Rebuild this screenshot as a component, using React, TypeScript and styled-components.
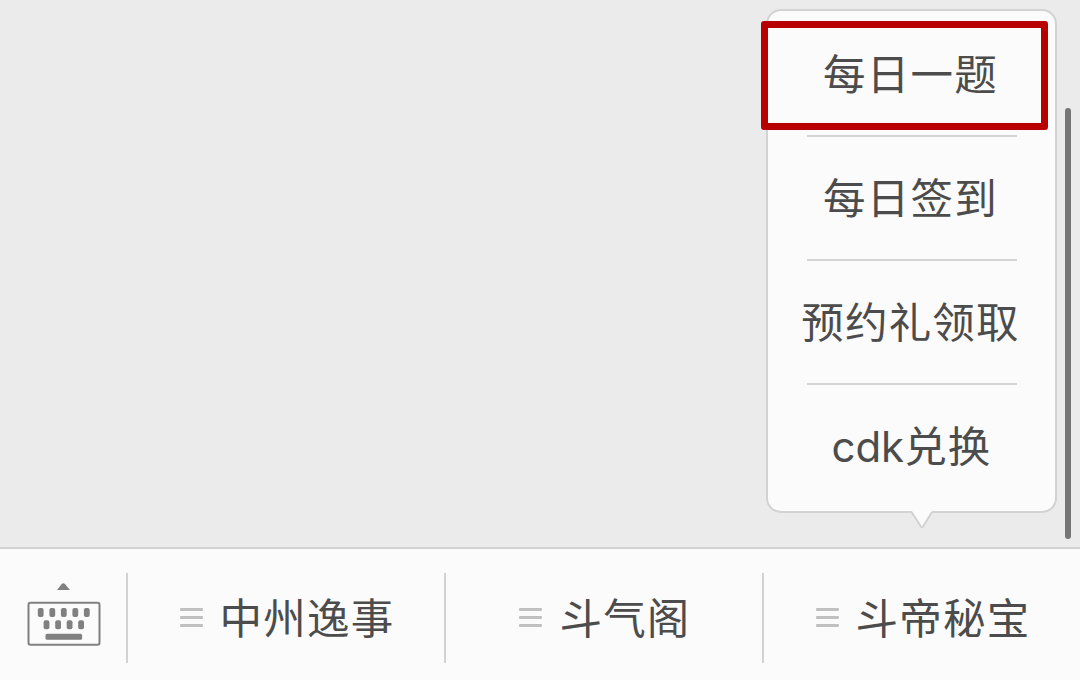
import * as React from "react"
import styled, { createGlobalStyle } from "styled-components"

const GlobalStyle = createGlobalStyle`
  body {
    margin: 0;
    overflow: hidden;
    font-family: "Noto Sans CJK SC", sans-serif;
    color: #4c4c4c;
  }
`

const Screen = styled.main`
  position: relative;
  width: 1080px;
  height: 680px;
  display: flex;
  flex-direction: column;
  background: #ebebeb;
`

const Chat = styled.section`
  flex: 1;
  display: flex;
  justify-content: flex-end;
  align-items: flex-start;
  box-sizing: border-box;
  padding: 9px 9px 0 0;
`

const Popup = styled.div`
  position: relative;
  width: 291px;
  height: 504px;
  box-sizing: border-box;
  padding: 2px 38px 0 39px;
  border: 2px solid #d2d2d2;
  border-radius: 15px;
  background: #fbfbfb;
`

const PopupItem = styled.div`
  height: 124px;
  box-sizing: border-box;
  display: flex;
  justify-content: center;
  align-items: center;
  padding: 0 3px 4px 0;
  border-bottom: 2px solid #d4d4d4;
  &:last-of-type {
    padding: 0 1px 1px 0;
    border-color: transparent;
  }
`

const Label = styled.span`
  font-size: 42.5px;
  line-height: 60px;
  letter-spacing: 1.2px;
  white-space: nowrap;
`

const Latin = styled.span`
  font-family: Inter, sans-serif;
  font-size: 42px;
  letter-spacing: 0;
`

const PopupArrow = styled.svg`
  position: absolute;
  left: 141.5px;
  top: 500px;
`

const Highlight = styled.div`
  position: absolute;
  left: 761px;
  top: 21px;
  width: 287px;
  height: 109px;
  box-sizing: border-box;
  border: 7px solid #b90000;
  border-radius: 3px;
`

const ScrollThumb = styled.div`
  width: 6px;
  height: 431px;
  margin: 99px 0 0 8px;
  border-radius: 3px;
  background: #757575;
`

const Toolbar = styled.nav`
  height: 133px;
  box-sizing: border-box;
  display: flex;
  border-top: 2px solid #d2d2d2;
  background: #fbfbfb;
`

const KeyboardButton = styled.div`
  width: 126px;
  padding: 32px 0 0 25.5px;
  box-sizing: border-box;
`

const MenuButton = styled.div`
  flex: 1;
  height: 90px;
  margin-top: 24px;
  padding: 0 0 4px 2px;
  box-sizing: border-box;
  display: flex;
  justify-content: center;
  align-items: center;
  gap: 17px;
  border-left: 2px solid #d2d2d2;
`

const Bars = styled.div`
  width: 23px;
  height: 19px;
  margin-top: 3px;
  display: flex;
  flex-direction: column;
  justify-content: space-between;
  > i {
    height: 3px;
    border-radius: 1px;
    background: #c0c0c0;
  }
`

const KeyboardIcon = () => (
  <svg width={76} height={66} viewBox="0 0 76 66" fill="#808080">
    <path d="M31 9L35.5 3.2Q37.3 1.2 39.1 3.2L44 9Z" />
    <rect x={2.5} y={21.7} width={71} height={42} rx={2} fill="none" stroke="#808080" strokeWidth={2} />
    {[11.8, 23.4, 34.9, 46.4, 57.9].map((x) => (
      <rect key={x} x={x} y={27} width={5.8} height={9} rx={2} />
    ))}
    {[17.6, 29.2, 40.7, 52.2].map((x) => (
      <rect key={x} x={x} y={39.3} width={5.8} height={9} rx={2} />
    ))}
    <rect x={19.5} y={52.8} width={36.6} height={6} rx={1.5} />
  </svg>
)

const menus = ["中州逸事", "斗气阁", "斗帝秘宝"]

const App = () => {
  return (
    <Screen>
      <GlobalStyle />
      <Chat>
        <Popup>
          <PopupItem>
            <Label>每日一题</Label>
          </PopupItem>
          <PopupItem>
            <Label>每日签到</Label>
          </PopupItem>
          <PopupItem>
            <Label>预约礼领取</Label>
          </PopupItem>
          <PopupItem>
            <Label>
              <Latin>cdk</Latin>兑换
            </Label>
          </PopupItem>
          <PopupArrow width={24} height={20} viewBox="0 0 24 20">
            <path d="M2 0L2 1L11 15.5Q12 17 13 15.5L22 1V0Z" fill="#fbfbfb" />
            <path d="M1.5 1L11 15.5Q12 17 13 15.5L22 1" fill="none" stroke="#d2d2d2" strokeWidth={2} />
          </PopupArrow>
        </Popup>
        <ScrollThumb />
      </Chat>
      <Toolbar>
        <KeyboardButton>
          <KeyboardIcon />
        </KeyboardButton>
        {menus.map((name) => (
          <MenuButton key={name}>
            <Bars>
              <i />
              <i />
              <i />
            </Bars>
            <Label>{name}</Label>
          </MenuButton>
        ))}
      </Toolbar>
      <Highlight />
    </Screen>
  )
}

export default App
